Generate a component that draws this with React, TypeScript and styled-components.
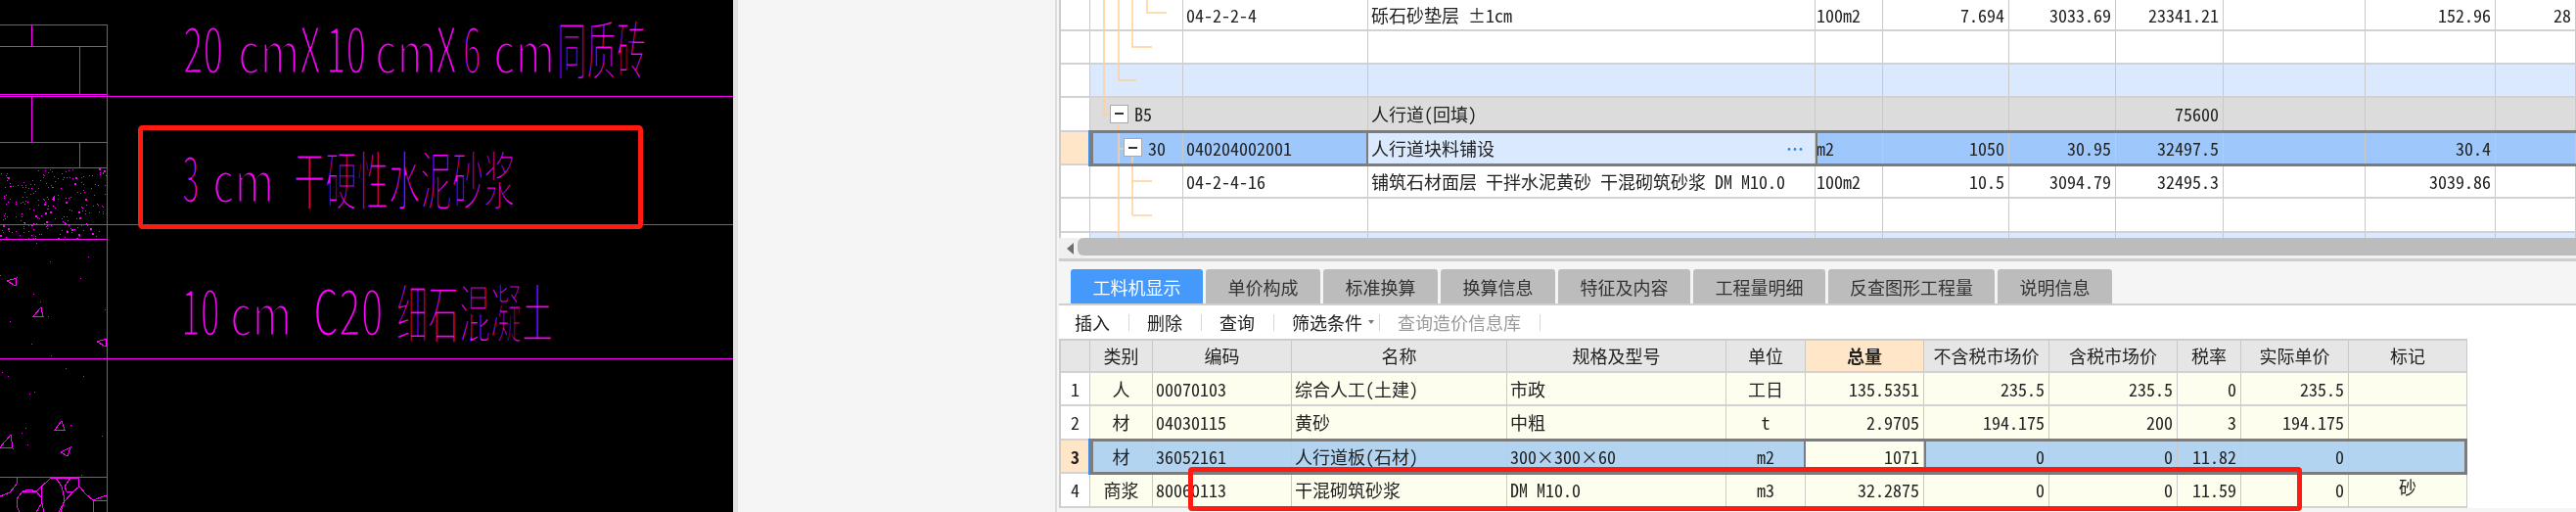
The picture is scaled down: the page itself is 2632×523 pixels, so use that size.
import React from "react";
import styled, { createGlobalStyle } from "styled-components";

const Global = createGlobalStyle`
  html, body { margin: 0; padding: 0; background: #f5f5f5; }
  body { font-family: "Noto Sans CJK SC", "Liberation Sans", sans-serif; }
`;

const Page = styled.div`
  display: flex;
  width: 2632px;
  height: 523px;
  overflow: hidden;
`;
const CadPane = styled.div`
  flex: 0 0 749px;
  background: #000;
`;
const CadSvg = styled.svg`
  display: block;
  width: 749px;
  height: 523px;
`;
const CadLabel = styled.text<{ $size?: number }>`
  font-family: "Noto Sans CJK SC", "Liberation Sans", sans-serif;
  font-weight: 400;
  font-size: ${(p) => p.$size ?? 66}px;
  fill: #f0f;
  stroke: #000;
  stroke-width: 3px;
  paint-order: fill stroke;
`;
const Gutter = styled.div`
  flex: 0 0 5px;
  background: #e2e2e2;
`;
const MidPane = styled.div`
  flex: 0 0 324px;
  background: #f5f5f5;
  border-right: 2px solid #dedede;
`;
const RightPane = styled.div`
  position: relative;
  flex: 0 0 1552px;
  padding-left: 2px;
  box-sizing: border-box;
  display: flex;
  flex-direction: column;
  overflow: hidden;
  color: #222;
  font-size: 18px;
  line-height: 1;
  font-feature-settings: "hwid";
`;
const Blurred = styled.div`
  display: flex;
  flex-direction: column;
  filter: blur(0.45px);
`;
const TopGrid = styled.div`
  position: relative;
  height: 243px;
  overflow: hidden;
  background: #fff;
  border-left: 2px solid #ccc;
`;
const Row = styled.div<{ $cols: string; $h: number; $sel?: boolean; $open?: boolean }>`
  position: relative;
  display: grid;
  grid-template-columns: ${(p) => p.$cols};
  height: ${(p) => p.$h}px;
  ${(p) =>
    p.$sel
      ? `&::after {
          content: "";
          position: absolute;
          inset: -2px 0 -1px 30px;
          border: 3px solid #7c7c7c;
          border-right-width: ${p.$open ? 0 : 3}px;
          box-shadow: -2px 0 0 #3a8ee6;
          pointer-events: none;
          z-index: 2;
        }`
      : ""}
`;
const Cell = styled.div<{
  $bg?: string;
  $align?: string;
  $bold?: boolean;
  $pad?: number;
  $lift?: boolean;
  $framed?: boolean;
}>`
  display: flex;
  align-items: center;
  box-sizing: border-box;
  min-width: 0;
  overflow: hidden;
  white-space: pre;
  justify-content: ${(p) => p.$align ?? "flex-start"};
  padding: 0 ${(p) => (p.$align === "flex-end" ? 4 : p.$align === "center" ? 0 : 3)}px ${(p) => (p.$lift ? 6 : 0)}px
    ${(p) => p.$pad ?? (p.$align === "center" ? 0 : 3)}px;
  background: ${(p) => p.$bg ?? "transparent"};
  font-weight: ${(p) => (p.$bold ? 700 : 400)};
  border-right: 1px solid #c9c9c9;
  border-bottom: 2px solid #d2d2d2;
  ${(p) => (p.$framed ? "box-shadow: 2px 0 0 #7c7c7c, -2px 0 0 #7c7c7c; position: relative; z-index: 1; overflow: visible;" : "")}
`;
const TreeBox = styled.span`
  flex: none;
  display: flex;
  align-items: center;
  justify-content: center;
  width: 19px;
  height: 19px;
  box-sizing: border-box;
  margin-right: 6px;
  background: #fff;
  border: 1.5px solid #a9a9a9;
  position: relative;
  z-index: 1;
  &::before {
    content: "";
    width: 9px;
    height: 2px;
    background: #333;
  }
`;
const TreeLabel = styled.span`
  position: relative;
  z-index: 1;
`;
const Dots = styled.span`
  margin-left: auto;
  margin-right: 8px;
  color: #2f8ee8;
  font-weight: 700;
`;
const TreeOverlay = styled.svg`
  position: absolute;
  left: 30px;
  top: 0;
  width: 95px;
  height: 243px;
  pointer-events: none;
`;
const ScrollTrack = styled.div`
  display: flex;
  align-items: center;
  height: 21px;
  background: #f0f0f0;
  border-bottom: 3px solid #cdcdcd;
`;
const ScrollArrow = styled.span`
  flex: none;
  width: 0;
  height: 0;
  margin: 0 4px 0 8px;
  border-style: solid;
  border-width: 6px 7px 6px 0;
  border-color: transparent #6f6f75 transparent transparent;
`;
const ScrollThumb = styled.div`
  flex: 1;
  height: 18px;
  align-self: flex-start;
  background: #bcbcbc;
  border-radius: 6px 0 0 6px;
`;
const TabStrip = styled.div`
  display: flex;
  gap: 3px;
  height: 45px;
  padding: 8px 0 0 12px;
  box-sizing: border-box;
  background: #f5f5f5;
  border-bottom: 2px solid #cfcfcf;
`;
const Tab = styled.div<{ $w: number; $active?: boolean }>`
  width: ${(p) => p.$w}px;
  display: flex;
  align-items: center;
  justify-content: center;
  border-radius: 3px 3px 0 0;
  background: ${(p) => (p.$active ? "#4499fb" : "#bcbcbc")};
  color: ${(p) => (p.$active ? "#fff" : "#333")};
`;
const Toolbar = styled.div`
  display: flex;
  align-items: center;
  height: 34px;
  padding-left: 16px;
  background: #fff;
`;
const ToolItem = styled.span<{ $muted?: boolean }>`
  color: ${(p) => (p.$muted ? "#9a9a9a" : "#222")};
`;
const ToolSep = styled.span<{ $ml?: number }>`
  width: 1px;
  height: 17px;
  margin: 0 18px 0 ${(p) => p.$ml ?? 19}px;
  background: #d6d6d6;
`;
const Caret = styled.span`
  width: 0;
  height: 0;
  margin-left: 6px;
  border-style: solid;
  border-width: 4px 3px 0 3px;
  border-color: #777 transparent transparent transparent;
`;
const BottomArea = styled.div`
  flex: 1;
  background: #fff;
`;
const BottomGrid = styled.div`
  width: 1439px;
  border-left: 2px solid #ccc;
  border-top: 2px solid #ccc;
  box-sizing: border-box;
`;
const RedFrame = styled.div`
  position: absolute;
  left: 134px;
  top: 477px;
  width: 1138px;
  height: 45px;
  box-sizing: border-box;
  border: 5px solid #ff1a12;
  border-radius: 4px;
  z-index: 5;
`;

const topCols = "30px 95px 189px 457px 69px 129px 109px 110px 145px 133px 82px";
const botCols = "30px 64px 142px 220px 224px 81px 121px 128px 131px 65px 110px 121px";

const R = "flex-end";
const C = "center";
const topAlign = [undefined, undefined, undefined, undefined, undefined, R, R, R, R, R, R];

type TopRow = { h: number; cells: string[]; bg?: string; numBg?: string; sel?: boolean; tree?: { pad: number; label: string } };
const blank = ["", "", "", "", "", "", "", "", ""];
const topRows: TopRow[] = [
  { h: 31.67, cells: ["04-2-2-4", "砾石砂垫层 ±1cm", "100m2", "7.694", "3033.69", "23341.21", "", "152.96", "28"] },
  { h: 34.33, cells: blank },
  { h: 34.33, bg: "#dbe9fe", cells: blank },
  { h: 34.33, bg: "#dcdcdc", tree: { pad: 20, label: "B5" }, cells: ["", "人行道(回填)", "", "", "", "75600", "", "", ""] },
  { h: 34.33, bg: "#9ec8fb", numBg: "#ffe6c9", sel: true, tree: { pad: 34, label: "30" }, cells: ["040204002001", "人行道块料铺设", "m2", "1050", "30.95", "32497.5", "", "30.4", ""] },
  { h: 34.33, cells: ["04-2-4-16", "铺筑石材面层 干拌水泥黄砂 干混砌筑砂浆 DM M10.0", "100m2", "10.5", "3094.79", "32495.3", "", "3039.86", ""] },
  { h: 34.33, cells: blank },
  { h: 34.33, bg: "#dbe9fe", cells: blank },
];

const headers = ["", "类别", "编码", "名称", "规格及型号", "单位", "总量", "不含税市场价", "含税市场价", "税率", "实际单价", "标记"];
const botAlign = [C, C, undefined, undefined, undefined, C, R, R, R, R, R, C];
const botRows = [
  ["1", "人", "00070103", "综合人工(土建)", "市政", "工日", "135.5351", "235.5", "235.5", "0", "235.5", ""],
  ["2", "材", "04030115", "黄砂", "中粗", "t", "2.9705", "194.175", "200", "3", "194.175", ""],
  ["3", "材", "36052161", "人行道板(石材)", "300×300×60", "m2", "1071", "0", "0", "11.82", "0", ""],
  ["4", "商浆", "80060113", "干混砌筑砂浆", "DM M10.0", "m3", "32.2875", "0", "0", "11.59", "0", "砂"],
];

const tabs: [string, number][] = [
  ["工料机显示", 135], ["单价构成", 117], ["标准换算", 117], ["换算信息", 117],
  ["特征及内容", 135], ["工程量明细", 135], ["反查图形工程量", 170], ["说明信息", 117],
];

function seeded(seed: number) {
  let s = seed;
  return () => {
    s = (s * 16807) % 2147483647;
    return (s - 1) / 2147483646;
  };
}
const rand = seeded(4711);
const sandDots = Array.from({ length: 230 }, () => ({
  x: Math.floor(rand() * 109),
  y: 172 + Math.floor(rand() * 72),
  s: rand() > 0.85 ? 2 : 1,
}));
const sparse = [
  [0, 843], [110, 745], [154, 801], [271, 786], [247, 852], [103, 900], [124, 924], [148, 968], [31, 984],
  [322, 948], [97, 1053], [157, 1089], [7, 1140], [25, 1152], [202, 1128], [256, 1152], [91, 1206], [106, 1200],
  [79, 1311], [67, 1326], [217, 1302], [85, 1362], [313, 1335], [250, 1455],
].map(([x, y]) => [Math.round(x / 3), Math.round(y / 3)]);

const hLines = [
  [0, 109, 25], [0, 109, 47], [0, 109, 96], [0, 749, 98], [0, 109, 145], [0, 109, 171],
  [0, 749, 229], [0, 109, 244], [0, 749, 366], [0, 109, 487],
];
const vLines = [
  [32, 25, 47], [81, 47, 96], [32, 98, 145], [81, 145, 171], [109, 25, 523],
];
const tris = [
  "7,287 17,284 16,292", "34,323 42,314 44,323", "99,349 109,346 108,354",
  "56,439 63,430 66,439", "0,457 11,444 13,458", "62,462 72,457 69,466",
];
const cobbles = [
  "17,487 18,493 15,497 10,503 0,507",
  "17,510 23,502 37,502 42,508 42,515 37,523",
  "20,523 17,517 17,510",
  "52,488 43,497 42,510 45,523",
  "57,488 63,497 66,510 62,523",
  "52,488 57,488 72,488 81,488",
  "66,497 72,488 80,488 81,497 75,502 68,502 66,497",
  "75,502 66,512 60,523",
  "81,497 88,505 95,511 109,506",
  "95,511 95,523",
  "95,511 109,511",
  "23,502 30,500 37,502 42,497 46,493",
];

// x, baseline, horizontal scale, font size, text
const labels: [number, number, number, number, string][] = [
  [187, 75, 0.56, 66, "20"],
  [243, 75, 0.76, 58, "cm"],
  [306, 75, 0.58, 66, "X"],
  [333, 75, 0.56, 66, "10"],
  [383, 75, 0.76, 58, "cm"],
  [445, 75, 0.58, 66, "X"],
  [473, 75, 0.5, 66, "6"],
  [504, 75, 0.76, 58, "cm"],
  [569, 76, 0.46, 66, "同质砖"],
  [186, 207, 0.48, 66, "3"],
  [217, 207, 0.76, 58, "cm"],
  [300, 209, 0.49, 66, "干硬性水泥砂浆"],
  [185, 343, 0.54, 66, "10"],
  [235, 343, 0.76, 58, "cm"],
  [320, 343, 0.62, 66, "C20"],
  [405, 345, 0.485, 66, "细石混凝土"],
];

const Cad = () => (
  <CadSvg viewBox="0 0 749 523" shapeRendering="crispEdges">
    {hLines.map(([a, b, y], i) => (
      <line key={i} x1={a} x2={b} y1={y + 0.5} y2={y + 0.5} stroke="#f0f" />
    ))}
    {vLines.map(([x, a, b], i) => (
      <line key={i} x1={x + 0.5} x2={x + 0.5} y1={a} y2={b} stroke="#f0f" />
    ))}
    {sandDots.map((d, i) => (
      <rect key={i} x={d.x} y={d.y} width={d.s} height={d.s} fill="#f0f" />
    ))}
    {sparse.map(([x, y], i) => (
      <rect key={i} x={x} y={y} width={1} height={1} fill="#f0f" />
    ))}
    {tris.map((p, i) => (
      <polygon key={i} points={p} fill="none" stroke="#f0f" />
    ))}
    {cobbles.map((p, i) => (
      <polyline key={i} points={p} fill="none" stroke="#f0f" />
    ))}
    <g shapeRendering="auto">
      {labels.map(([x, y, sx, size, t], i) => (
        <CadLabel key={i} $size={size} transform={`translate(${x} ${y}) scale(${sx} 1)`}>{t}</CadLabel>
      ))}
      <rect x={143.5} y={130.5} width={511} height={101} rx={2} fill="none" stroke="#ff1a12" strokeWidth={5} />
    </g>
  </CadSvg>
);

const tree = [
  "M14 0V117H20", "M29 0V82H47", "M43 0V48H63", "M58 0V13H78",
  "M29 127V243", "M29 152H35", "M43 160V220", "M43 185H63", "M43 220H63",
];

export default function App() {
  return (
    <Page>
      <Global />
      <CadPane><Cad /></CadPane>
      <Gutter />
      <MidPane />
      <RightPane>
        <Blurred>
          <TopGrid>
            {topRows.map((r, i) => (
              <Row key={i} $cols={topCols} $h={r.h} $sel={r.sel} $open>
                <Cell $bg={r.numBg} />
                <Cell $bg={r.bg} $pad={r.tree?.pad}>
                  {r.tree && <TreeBox />}
                  {r.tree && <TreeLabel>{r.tree.label}</TreeLabel>}
                </Cell>
                {r.cells.map((c, j) => {
                  const isActiveName = !!r.sel && j === 1;
                  return (
                    <Cell
                      key={j}
                      $bg={isActiveName ? "#dbe9fe" : r.bg}
                      $align={topAlign[j + 2]}
                      $pad={j === 2 ? 1 : undefined}
                      $framed={isActiveName}
                    >
                      {c}
                      {isActiveName && <Dots>…</Dots>}
                    </Cell>
                  );
                })}
              </Row>
            ))}
            <TreeOverlay viewBox="0 0 95 243">
              {tree.map((d, i) => (
                <path key={i} d={d} fill="none" stroke="#ffcf94" strokeWidth={1.5} />
              ))}
            </TreeOverlay>
          </TopGrid>
          <ScrollTrack>
            <ScrollArrow />
            <ScrollThumb />
          </ScrollTrack>
          <TabStrip>
            {tabs.map(([t, w], i) => (
              <Tab key={t} $w={w} $active={i === 0}>{t}</Tab>
            ))}
          </TabStrip>
          <Toolbar>
            <ToolItem>插入</ToolItem>
            <ToolSep />
            <ToolItem>删除</ToolItem>
            <ToolSep />
            <ToolItem>查询</ToolItem>
            <ToolSep />
            <ToolItem>筛选条件</ToolItem>
            <Caret />
            <ToolSep $ml={5} />
            <ToolItem $muted>查询造价信息库</ToolItem>
            <ToolSep />
          </Toolbar>
          <BottomArea>
            <BottomGrid>
              <Row $cols={botCols} $h={32.5}>
                {headers.map((h, i) => (
                  <Cell key={i} $align={C} $bg={i === 6 ? "#ffe6c9" : "#e6e6e6"} $bold={i === 6}>{h}</Cell>
                ))}
              </Row>
              {botRows.map((r, i) => {
                const sel = i === 2;
                return (
                  <Row key={i} $cols={botCols} $h={34.5} $sel={sel}>
                    {r.map((c, j) => {
                      let bg = sel ? "#b3d4f0" : "#fefeef";
                      if (j === 0) bg = sel ? "#ffe6c9" : "#fff";
                      if (sel && j === 6) bg = "#fefeef";
                      return (
                        <Cell
                          key={j}
                          $bg={bg}
                          $align={botAlign[j]}
                          $bold={sel && j === 0}
                          $lift={c === "砂"}
                          $framed={sel && j === 6}
                        >
                          {c}
                        </Cell>
                      );
                    })}
                  </Row>
                );
              })}
            </BottomGrid>
          </BottomArea>
        </Blurred>
        <RedFrame />
      </RightPane>
    </Page>
  );
}
